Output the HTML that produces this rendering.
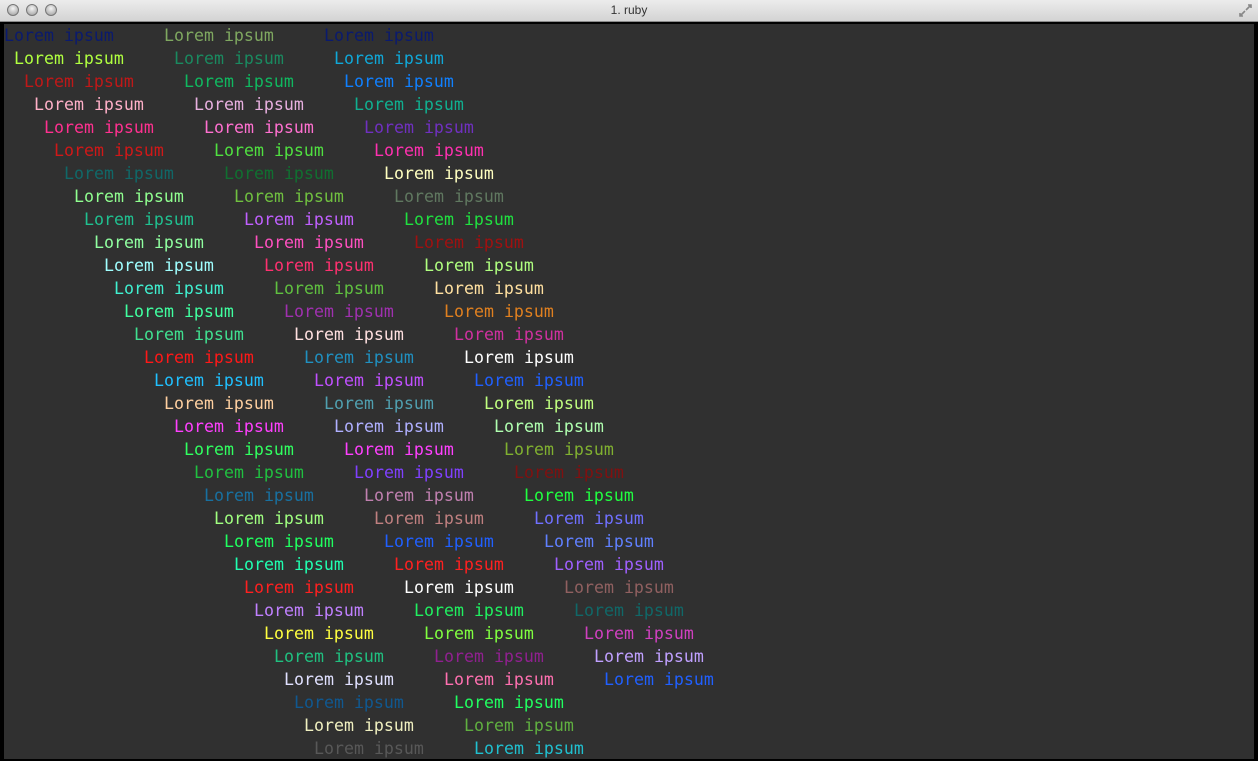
<!DOCTYPE html>
<html><head><meta charset="utf-8"><style>
*{margin:0;padding:0}
html,body{width:1258px;height:761px;overflow:hidden;background:#000}
#tb{position:absolute;left:0;top:0;width:1258px;height:21px;background:linear-gradient(#ececec,#d3d3d3);border-bottom:1px solid #8a8a8a;font:12px "Liberation Sans",sans-serif;color:#333;text-align:center;line-height:21px}
.d{position:absolute;top:4px;width:12px;height:12px;border-radius:50%;background:radial-gradient(circle at 50% 35%,#f4f4f4,#9a9a9a);border:1px solid #777;box-sizing:border-box}
#term{position:absolute;left:4px;top:24px;width:1250px;height:735px;background:#303030}
.r{position:absolute;font-family:"DejaVu Sans Mono","Liberation Mono",monospace;font-size:16.6px;line-height:23px;white-space:pre;height:23px}
.r span{position:absolute;top:0}
</style></head><body>
<div id="tb">1. ruby<div class="d" style="left:7px"></div><div class="d" style="left:26px"></div><div class="d" style="left:45px"></div>
<svg style="position:absolute;right:6px;top:4px" width="13" height="13" viewBox="0 0 13 13"><path d="M7 6L12 1M9 1h3v3M6 7L1 12M1 9v3h3" stroke="#888" stroke-width="1.6" fill="none"/></svg></div>
<div id="term"></div>
<div id="c"></div>
<script>
var C=[
["#0a1a6e","#7fa860","#0a1a6e"],["#b0ff40","#1a8a60","#10a8d8"],["#c01818","#10b860","#1080ff"],["#ffb0c8","#e8b0e0","#10b090"],
["#ff3090","#ff70d0","#7030c0"],["#d01818","#50e040","#ff30b0"],["#106868","#107030","#ffffc0"],["#90ff90","#70c040","#607860"],
["#20c090","#c060ff","#20e040"],["#90ffa0","#ff50c0","#a01010"],["#a0ffff","#ff3070","#b0ff80"],["#40f0d0","#60c040","#ffe0a0"],
["#40ffa0","#a030b0","#e08020"],["#40e090","#ffe0e0","#d030a0"],["#ff1818","#2090c0","#ffffff"],["#20c0ff","#c050ff","#2060ff"],
["#ffd0a0","#50a0b0","#c0ff80"],["#ff40ff","#b0b0ff","#b0ffb0"],["#30ff60","#ff40ff","#80b030"],["#20c040","#8040ff","#801010"],
["#1870a0","#c080b0","#20ff40"],["#a0ff80","#c08080","#7070ff"],["#20ff60","#2060ff","#6080ff"],["#20ffb0","#ff2020","#a060ff"],
["#ff2020","#ffffff","#906060"],["#c080ff","#20f060","#106868"],["#ffff40","#80ff40","#d040c0"],["#20c080","#902090","#c0a0ff"],
["#e0e0ff","#ff70b0","#2060ff"],["#105890","#20ff60"],["#f0f0c0","#60b040"],["#585858","#20c0d0"]];
var h="";
C.forEach(function(r,i){h+='<div class="r" style="top:'+(24+23*i)+'px;left:'+(4+10*i)+'px">';
r.forEach(function(c,j){h+='<span style="left:'+(160*j)+'px;color:'+c+'">Lorem ipsum</span>'});h+='</div>'});
document.getElementById('c').innerHTML=h;
</script>
</body></html>
